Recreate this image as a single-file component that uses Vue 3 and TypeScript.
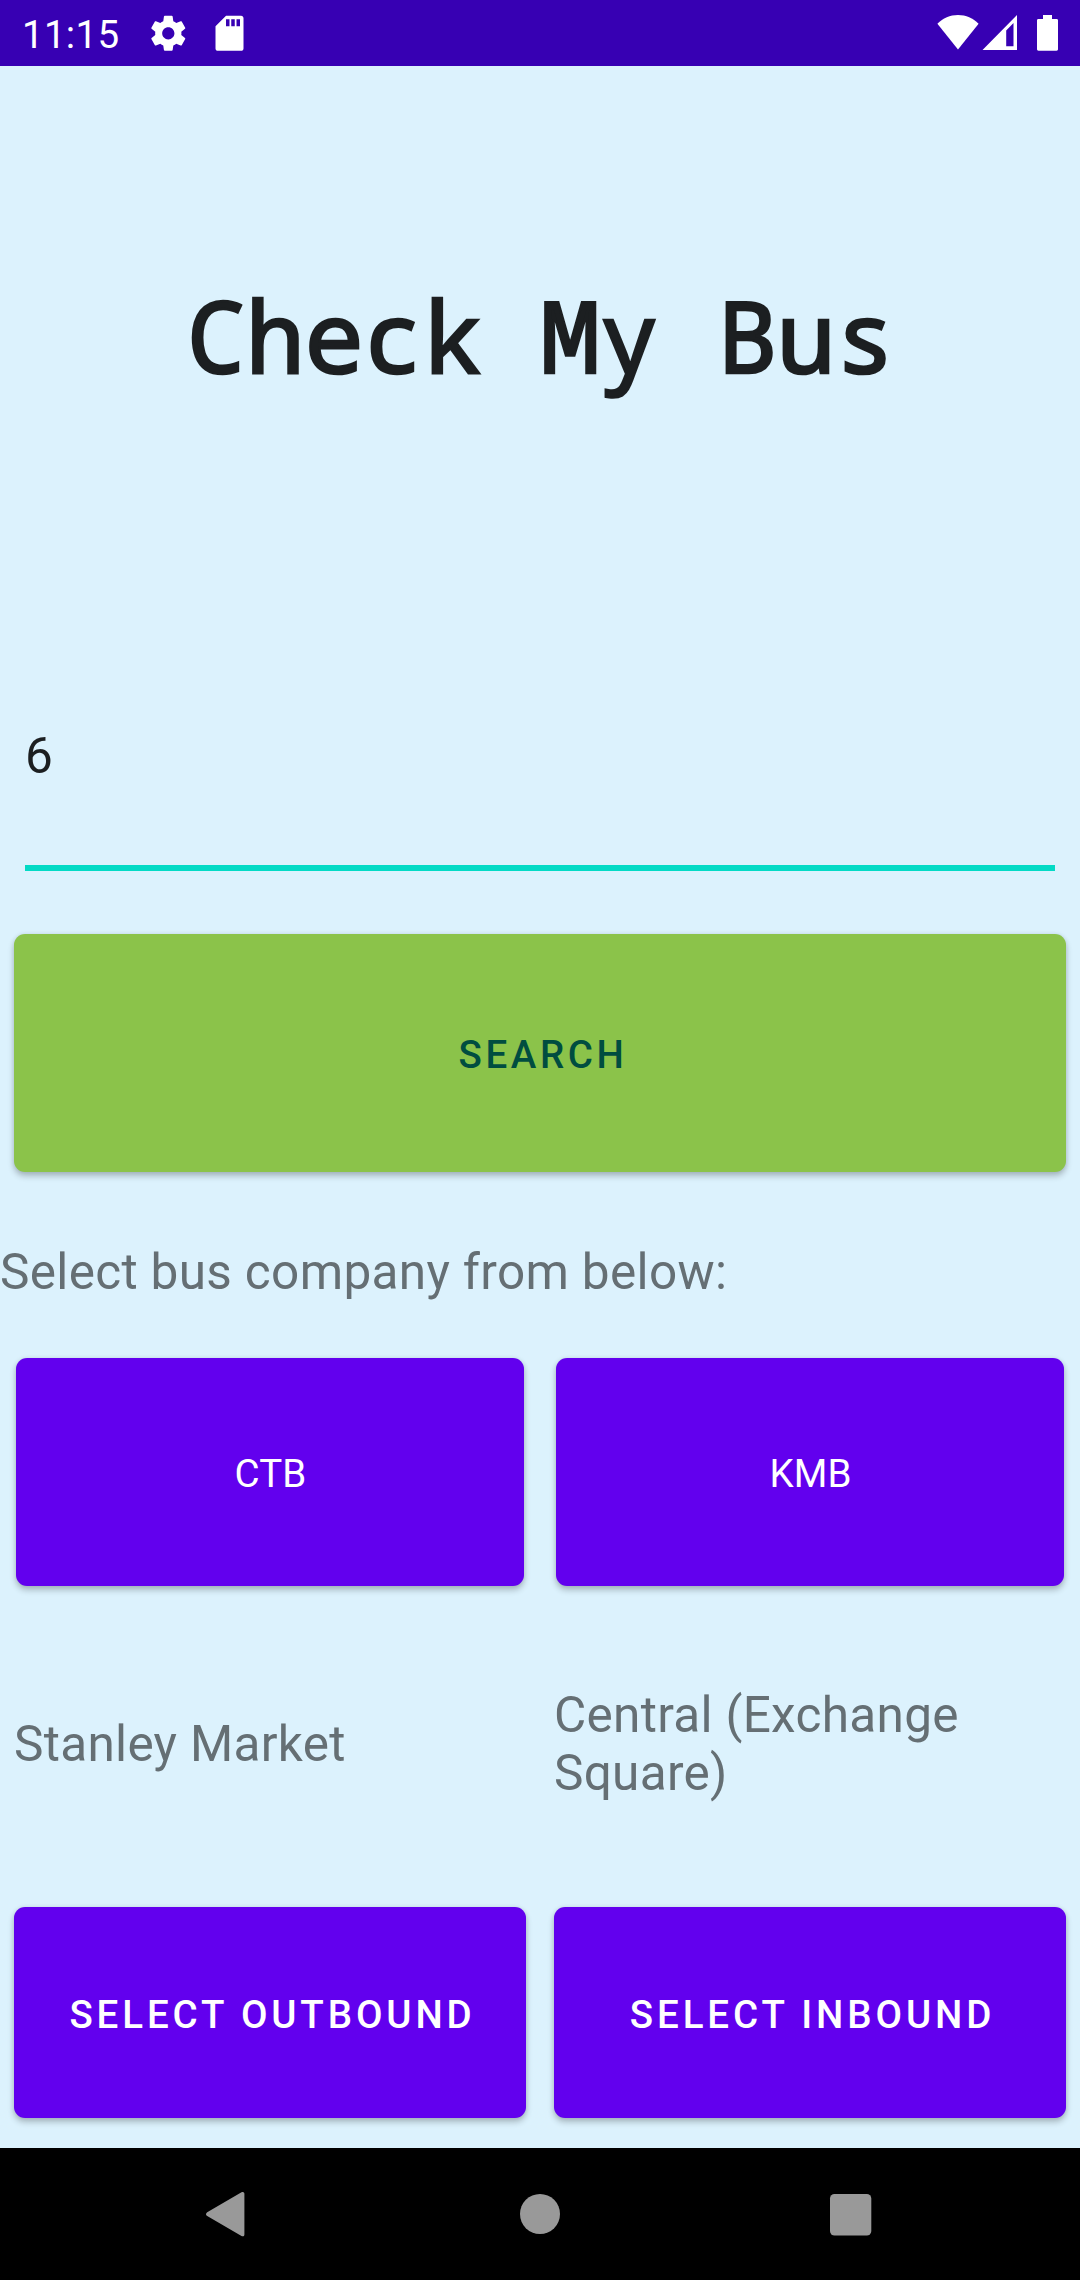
<script setup lang="ts">
import { ref } from 'vue'

interface Direction {
  stop: string
  action: string
}

const route = ref('6')
const companies: string[] = ['CTB', 'KMB']
const directions: Direction[] = [
  { stop: 'Stanley Market', action: 'SELECT OUTBOUND' },
  { stop: 'Central (Exchange Square)', action: 'SELECT INBOUND' },
]
</script>

<template>
  <div class="screen">
    <header class="status">
      <span class="clock">11:15</span>
      <svg class="gear" width="42" height="42" viewBox="-0.17 -0.2 24 24" fill="#fff">
        <path d="M19.43 12.98c.04-.32.07-.64.07-.98s-.03-.66-.07-.98l2.11-1.65c.19-.15.24-.42.12-.64l-2-3.46c-.12-.22-.39-.3-.61-.22l-2.49 1c-.52-.4-1.08-.73-1.69-.98l-.38-2.65C14.46 2.18 14.25 2 14 2h-4c-.25 0-.46.18-.49.42l-.38 2.65c-.61.25-1.17.59-1.69.98l-2.49-1c-.23-.09-.49 0-.61.22l-2 3.46c-.13.22-.07.49.12.64l2.11 1.65c-.04.32-.07.65-.07.98s.03.66.07.98l-2.11 1.65c-.19.15-.24.42-.12.64l2 3.46c.12.22.39.3.61.22l2.49-1c.52.4 1.08.73 1.69.98l.38 2.65c.03.24.24.42.49.42h4c.25 0 .46-.18.49-.42l.38-2.65c.61-.25 1.17-.59 1.69-.98l2.49 1c.23.09.49 0 .61-.22l2-3.46c.12-.22.07-.49-.12-.64l-2.11-1.65zM12 15.5c-1.93 0-3.5-1.57-3.5-3.5s1.57-3.5 3.5-3.5 3.5 1.57 3.5 3.5-1.57 3.5-3.5 3.5z" />
      </svg>
      <svg class="card" width="42" height="42" viewBox="-0.29 -0.2 24 24" fill="#fff">
        <path d="M18.6 2H10L4 8v12.6c0 .8.6 1.4 1.4 1.4h13.2c.8 0 1.4-.6 1.4-1.4V3.400c0-.8-.6-1.400-1.400-1.400zM12 8h-2V4h2v4zm3 0h-2V4h2v4zm3 0h-2V4h2v4z" />
      </svg>
      <svg class="wifi" width="42" height="36" viewBox="0 0 42 36" fill="#fff">
        <path d="M21 35.500L.4 9.800C6 4 13 1 21 1s15 3 20.600 8.800z" />
      </svg>
      <svg class="signal" width="36" height="36" viewBox="0 0 36 36" fill="#fff" fill-rule="evenodd">
        <path d="M.5 36L35 1v35zM24.200 32.200H31.500V9L24.200 16.400z" />
      </svg>
      <svg class="battery" width="21" height="36" viewBox="0 0 21 36" fill="#fff">
        <path d="M6 0h9v4h4.500C20.500 4 21 4.500 21 5.500V34c0 1-.5 1.700-1.500 1.700h-18C.5 35.700 0 35 0 34V5.500C0 4.500.5 4 1.500 4H6z" />
      </svg>
    </header>

    <main class="content">
      <h1 class="title">Check My Bus</h1>
      <input v-model="route" class="route" type="text" aria-label="Route" />
      <button class="btn search">SEARCH</button>
      <p class="hint">Select bus company from below:</p>
      <div class="companies">
        <button v-for="c in companies" :key="c" class="btn company">{{ c }}</button>
      </div>
      <div class="stops">
        <p v-for="d in directions" :key="d.stop" class="stop">{{ d.stop }}</p>
      </div>
      <div class="actions">
        <button v-for="d in directions" :key="d.action" class="btn action">{{ d.action }}</button>
      </div>
    </main>

    <nav class="nav">
      <svg width="60" height="60" viewBox="0 0 60 60" fill="#999">
        <path d="M8.200 28.200L42.500 8.300c1.500-.9 2.900-.2 2.900 1.500v40.600c0 1.700-1.400 2.400-2.900 1.500L8.200 32c-1.600-1-1.600-2.800 0-3.800z" />
      </svg>
      <svg width="60" height="60" viewBox="0 0 60 60" fill="#999">
        <circle cx="30" cy="30" r="20" />
      </svg>
      <svg width="60" height="60" viewBox="0 0 60 60" fill="#999">
        <rect x="9" y="10" width="41.300" height="41.500" rx="4.500" />
      </svg>
    </nav>
  </div>
</template>

<style>
body {
  margin: 0;
}
</style>

<style scoped>
.screen {
  width: 1080px;
  height: 2280px;
  display: flex;
  flex-direction: column;
  background: #dcf2fd;
  font-family: Roboto, 'Noto Sans', sans-serif;
  overflow: hidden;
}

.status {
  height: 66px;
  flex: none;
  display: flex;
  box-sizing: border-box;
  padding: 0 22px;
  background: #3700b3;
  color: #fff;
}

.clock {
  width: 125px;
  font-size: 38.5px;
  line-height: 70px;
  letter-spacing: 0.3px;
}

.gear {
  margin: 12px 0 0 0;
}

.card {
  margin: 12px 0 0 19px;
}

.wifi {
  margin: 14px 0 0 auto;
}

.signal {
  margin: 14px 0 0 3px;
}

.battery {
  margin: 15px 0 0 19px;
}

.content {
  flex: 1;
  display: flex;
  flex-direction: column;
}

.title {
  margin: 204px 0 0;
  padding-left: 1px;
  height: 130px;
  color: #1c1f21;
  font-family: 'Noto Sans Mono', 'DejaVu Sans Mono', monospace;
  font-size: 99px;
  font-weight: 400;
  line-height: 130px;
  letter-spacing: -0.4px;
  text-align: center;
  white-space: pre;
  -webkit-text-stroke: 2.600px #1c1f21;
}

.route {
  width: 1030px;
  height: 236px;
  box-sizing: border-box;
  margin: 235px 25px 0;
  padding: 12px 0 0;
  border: 0;
  border-bottom: 6px solid #03dac5;
  border-radius: 0;
  outline: 0;
  background: transparent;
  color: #1c1f21;
  font: 400 49.5px Roboto, 'Noto Sans', sans-serif;
}

.btn {
  border: 0;
  padding: 2px 0 0 5px;
  border-radius: 11px;
  background: #6200ee;
  color: #fff;
  font: 500 38.5px Roboto, 'Noto Sans', sans-serif;
  letter-spacing: 3.840px;
  box-shadow: 0 4px 6px rgba(0, 0, 0, 0.24), 0 0 5px rgba(0, 0, 0, 0.08);
}

.search {
  height: 238px;
  margin: 63px 14px 0;
  padding-left: 6px;
  background: #8bc34a;
  color: #004d40;
  letter-spacing: 3.6px;
}

.hint {
  margin: 71px 0 0;
  height: 58px;
  color: #656f74;
  font-size: 49.5px;
  line-height: 58px;
  letter-spacing: 0.33px;
}

.companies {
  display: flex;
  gap: 32px;
  margin: 57px 16px 0;
}

.company {
  flex: 1;
  height: 228px;
  padding-left: 1px;
  font-weight: 400;
  letter-spacing: 0.1px;
}

.stops {
  display: flex;
  align-items: center;
  gap: 28px;
  height: 321px;
  box-sizing: border-box;
  margin: 0 14px;
  padding-bottom: 6px;
}

.stop {
  flex: 1;
  margin: 0;
  color: #656f74;
  font-size: 49.5px;
  line-height: 58px;
  letter-spacing: 0.3px;
}

.actions {
  display: flex;
  gap: 28px;
  margin: 0 14px;
}

.action {
  flex: 1;
  height: 211px;
  padding-top: 4px;
  letter-spacing: 3.88px;
}

.nav {
  height: 132px;
  flex: none;
  display: flex;
  justify-content: center;
  align-items: center;
  gap: 251px;
  background: #000;
}
</style>
